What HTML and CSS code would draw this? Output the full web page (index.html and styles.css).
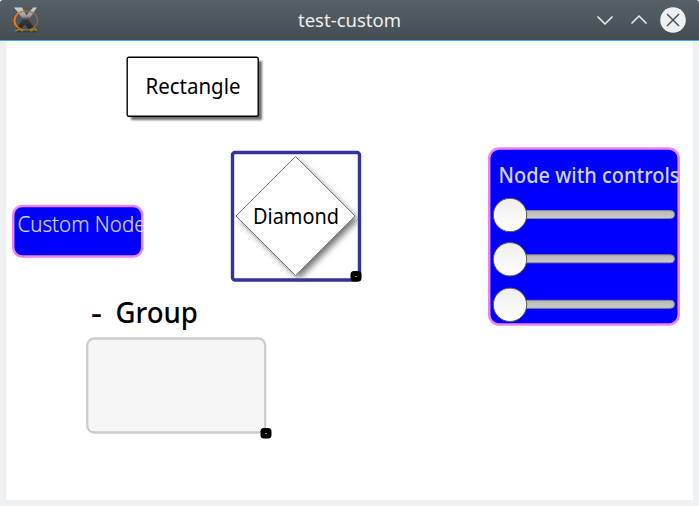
FILE: index.html
```html
<!DOCTYPE html>
<html lang="en">
<head>
<meta charset="utf-8">
<title>test-custom</title>
<link rel="stylesheet" href="styles.css">
</head>
<body>
<div class="window">
  <header class="titlebar">
    <svg class="app-icon" viewBox="0 0 28 28">
      <defs>
        <linearGradient id="metal" x1="0" y1="0" x2="0" y2="1"><stop offset="0" stop-color="#d0d1d1"/><stop offset=".4" stop-color="#999b9c"/><stop offset=".58" stop-color="#39383a"/><stop offset="1" stop-color="#292524"/></linearGradient>
        <linearGradient id="fire"><stop offset="0" stop-color="#f47c13"/><stop offset=".55" stop-color="#9b752d"/><stop offset="1" stop-color="#807347"/></linearGradient>
      </defs>
      <path d="M3 25.500h23" stroke="#33383b" stroke-opacity=".7" stroke-width="2"/>
      <path d="M2 1.500h8l4.500 8 6.500-8h4l-8.500 12.500 6.500 9h-7l-3-5-4 5H4l7-10z" fill="url(#metal)"/>
      <ellipse cx="14" cy="14.500" rx="11.700" ry="9.500" fill="none" stroke="url(#fire)" stroke-width="1.200"/>
      <path d="M6 7Q-1 15 6 22" fill="none" stroke="#f17410" stroke-width="1.700"/>
      <path d="M3 25l4-2 4 2M18 25l5-2 2 2" fill="none" stroke="#a68017" stroke-width="1.500"/>
    </svg>
    <svg class="caption" viewBox="0 0 110 30"><text x="3" y="22" textLength="103" lengthAdjust="spacingAndGlyphs">test-custom</text></svg>
    <svg class="buttons" viewBox="0 0 100 40">
      <path d="M7.500 16.500l7.500 7.500 7.500-7.500M41.500 23.500l7.500-7.500 7.500 7.500"/>
      <circle cx="83" cy="20" r="12.800"/>
      <path class="cross" d="M77 14l12 12m0-12l-12 12"/>
    </svg>
  </header>
  <main class="canvas">
    <section class="node rectangle">
      <svg viewBox="0 0 142 70">
        <rect class="shadow" x="5" y="5" width="131" height="59"/>
        <rect class="outline" x="1.200" y="1.200" width="131" height="59" rx="1.500"/>
        <text class="label" x="19.500" y="38" textLength="95" lengthAdjust="spacingAndGlyphs">Rectangle</text>
      </svg>
    </section>
    <section class="node diamond">
      <svg viewBox="0 0 136 136">
        <rect class="selection" x="2.500" y="2.500" width="127" height="127.500" rx="2.500"/>
        <path class="diamond-shadow" d="M69 11l59 59-59 59-59-59z"/>
        <path class="diamond-shape" d="M65.500 6.500l59.500 59.500-59.500 59.500L6 66z"/>
        <text class="label" x="23" y="73.500" textLength="86" lengthAdjust="spacingAndGlyphs">Diamond</text>
        <rect x="120.500" y="121" width="11" height="10.500" rx="3.500"/>
        <rect x="125" y="126" width="2" height="1" fill="#999"/>
      </svg>
    </section>
    <section class="node custom">
      <svg viewBox="0 0 134 55">
        <rect class="blue" x="2.200" y="1.900" width="129" height="50.500" rx="9"/>
        <text class="pale" x="6.500" y="27.500" textLength="128" lengthAdjust="spacingAndGlyphs">Custom Node</text>
      </svg>
    </section>
    <section class="node controls">
      <svg viewBox="0 0 193 180">
        <defs>
          <linearGradient id="knob" x1="0" y1="0" x2="0" y2="1"><stop stop-color="#eee"/><stop offset="1" stop-color="#fff"/></linearGradient>
          <linearGradient id="track" x1="0" y1="0" x2="0" y2="1"><stop stop-color="#b7b7b7"/><stop offset="1" stop-color="#ccc"/></linearGradient>
          <g id="slider"><rect x="7" y="-4" width="179.500" height="8" rx="4" fill="url(#track)" stroke="#888"/><circle cx="22" cy="0.500" r="16.700" fill="url(#knob)" stroke="#555"/></g>
        </defs>
        <rect class="blue" x="1.200" y="1.500" width="189.500" height="176" rx="10"/>
        <text class="pale strong" x="10.500" y="35.500" textLength="181" lengthAdjust="spacingAndGlyphs">Node with controls</text>
        <use href="#slider" y="67.500"/><use href="#slider" y="111.800"/><use href="#slider" y="157.300"/>
      </svg>
    </section>
    <section class="node group">
      <svg viewBox="0 0 190 145">
        <text class="heading" x="5" y="28" textLength="11" lengthAdjust="spacingAndGlyphs">-</text>
        <text class="heading" x="29.500" y="28" textLength="82.500" lengthAdjust="spacingAndGlyphs">Group</text>
        <rect class="group-box" x="1.200" y="43.500" width="178" height="94" rx="7"/>
        <rect x="174.500" y="133" width="11" height="10.500" rx="3.500"/>
        <rect x="179" y="138" width="2" height="1" fill="#999"/>
      </svg>
    </section>
  </main>
</div>
</body>
</html>
```

FILE: styles.css
```css
* { box-sizing: border-box; }
body { margin: 0; overflow: hidden; background: #fff; }
svg { display: block; width: 100%; height: 100%; overflow: visible; }
.window {
  width: 699px;
  height: 506px;
  display: grid;
  grid-template-rows: 41px 1fr;
  background: #eff0f1;
  border-radius: 3px 3px 0 0;
  overflow: hidden;
}
.titlebar {
  display: grid;
  grid-template-columns: 28px 110px 100px;
  justify-content: space-between;
  align-items: center;
  padding: 0 9px 0 12px;
  background: linear-gradient(#566068, #454d54);
  border-bottom: 1px solid #3daee9;
}
.app-icon { width: 28px; height: 28px; }
.caption { width: 110px; height: 30px; position: relative; left: 35px; font: 18px "Noto Sans", sans-serif; fill: #eff0f1; }
.buttons { width: 100px; height: 40px; fill: none; stroke: #eff0f1; stroke-width: 1.5; }
.buttons circle { fill: #eff0f1; stroke: none; }
.buttons .cross { stroke: #475057; }
.canvas { position: relative; margin: 0 6px 6px; background: #fff; }
.node { position: absolute; }
.rectangle { left: 120px; top: 15px; width: 142px; height: 70px; }
.diamond { left: 224px; top: 109px; width: 136px; height: 136px; }
.custom { left: 5px; top: 163px; width: 134px; height: 55px; }
.controls { left: 482px; top: 106px; width: 193px; height: 180px; }
.group { left: 80px; top: 254px; width: 190px; height: 145px; }
.label, .pale { font: 350 21px "Noto Sans", "Open Sans", sans-serif; }
.label { font-weight: 400; fill: #000; }
.custom, .controls { clip-path: inset(0 1px 0 0); }
.custom .pale { stroke: #d3d3d3; stroke-width: .2px; }
.pale { fill: #d3d3d3; }
.strong { font-weight: 500; }
.heading { font: 500 28.5px "Noto Sans", sans-serif; }
.shadow { fill: #555; filter: blur(1.3px); opacity: .85; }
.outline { fill: #fff; stroke: #000; stroke-width: 1.4; }
.selection { fill: #fff; stroke: #333399; stroke-width: 3.4; }
.diamond-shadow { fill: #555; filter: blur(3px); opacity: .8; }
.diamond-shape { fill: #fff; stroke: #777; stroke-width: 1; }
.blue { fill: #00f; stroke: violet; stroke-width: 2.5; }
.group-box { fill: #f6f6f6; stroke: #ccc; stroke-width: 2.3; }
```
